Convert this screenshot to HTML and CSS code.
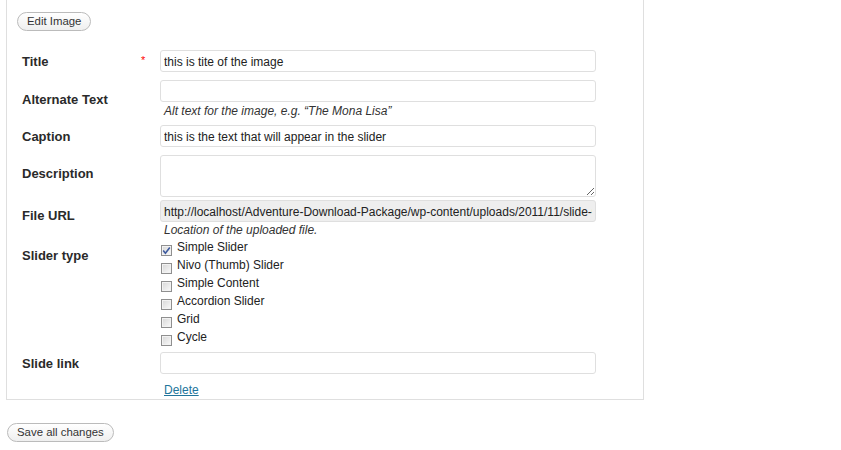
FILE: index.html
```html
<!DOCTYPE html>
<html>
<head>
<meta charset="utf-8">
<link rel="stylesheet" href="styles.css">
</head>
<body>
<div class="page">
  <div class="box">
    <button class="btn btn-edit" type="button">Edit Image</button>
    <div class="form">
      <div class="row">
        <div class="label">Title</div>
        <div class="req">*</div>
        <div class="field"><input class="text" type="text" value="this is tite of the image"></div>
      </div>
      <div class="row row-alt">
        <div class="label">Alternate Text</div>
        <div class="req"></div>
        <div class="field"><input class="text" type="text" value=""><p class="help">Alt text for the image, e.g. “The Mona Lisa”</p></div>
      </div>
      <div class="row">
        <div class="label">Caption</div>
        <div class="req"></div>
        <div class="field"><input class="text" type="text" value="this is the text that will appear in the slider"></div>
      </div>
      <div class="row row-desc">
        <div class="label">Description</div>
        <div class="req"></div>
        <div class="field"><textarea class="area"></textarea></div>
      </div>
      <div class="row row-url">
        <div class="label">File URL</div>
        <div class="req"></div>
        <div class="field"><input class="text readonly" type="text" readonly value="http://localhost/Adventure-Download-Package/wp-content/uploads/2011/11/slide-01.jpg"><p class="help">Location of the uploaded file.</p></div>
      </div>
      <div class="row row-types">
        <div class="label">Slider type</div>
        <div class="req"></div>
        <div class="field checks">
          <label class="check"><span class="box-check checked"><svg width="9" height="9" viewBox="0 0 9 9"><path d="M1.2 4.6 L3.4 7.2 L7.8 1.4" fill="none" stroke="#3d5a9e" stroke-width="1.6"/></svg></span>Simple Slider</label>
          <label class="check"><span class="box-check"></span>Nivo (Thumb) Slider</label>
          <label class="check"><span class="box-check"></span>Simple Content</label>
          <label class="check"><span class="box-check"></span>Accordion Slider</label>
          <label class="check"><span class="box-check"></span>Grid</label>
          <label class="check"><span class="box-check"></span>Cycle</label>
        </div>
      </div>
      <div class="row row-link">
        <div class="label">Slide link</div>
        <div class="req"></div>
        <div class="field"><input class="text" type="text" value=""></div>
      </div>
      <div class="row row-delete">
        <div class="label"></div>
        <div class="req"></div>
        <div class="field"><a class="delete" href="#">Delete</a></div>
      </div>
    </div>
  </div>
  <button class="btn btn-save" type="button">Save all changes</button>
</div>
</body>
</html>
```

FILE: styles.css
```css
html, body {
  margin: 0;
  padding: 0;
  background: #fff;
}
body {
  font-family: "Liberation Sans", Arial, sans-serif;
  color: #333;
  font-size: 12px;
}
.page {
  padding-left: 6px;
}
.box {
  width: 636px;
  border: 1px solid #dfdfdf;
  border-top: none;
  padding: 12px 0 1px 0;
}
.btn {
  font-family: "Liberation Sans", Arial, sans-serif;
  font-size: 11.4px;
  color: #333;
  height: 19px;
  line-height: 17px;
  padding: 0 9px;
  border: 1px solid #bbb;
  border-radius: 11px;
  background: linear-gradient(#ffffff, #efefef);
  display: block;
}
.btn-edit {
  margin-left: 10px;
}
.btn-save {
  margin: 23px 0 0 1px;
}
.form {
  margin-top: 19px;
}
.row {
  display: grid;
  grid-template-columns: 133px 20px 436px;
  align-items: center;
  margin-bottom: 8px;
}
.label {
  padding-left: 15px;
  padding-top: 2px;
  font-size: 13px;
  font-weight: bold;
  line-height: 16px;
  color: #2a2a2a;
}
.req {
  color: #ff0000;
  font-size: 11px;
  line-height: 10px;
  padding-left: 1px;
  margin-top: -3px;
}
.field {
  display: flex;
  flex-direction: column;
}
.text {
  box-sizing: border-box;
  width: 436px;
  height: 22px;
  border: 1px solid #dfdfdf;
  border-radius: 3px;
  padding: 1px 3px 0 3px;
  margin: 0;
  font-family: "Liberation Sans", Arial, sans-serif;
  font-size: 12px;
  color: #222;
  background: #fff;
  outline: none;
}
.readonly {
  background: #eeeeee;
}
.help {
  margin: 0;
  padding-left: 4px;
  font-style: italic;
  font-size: 12px;
  line-height: 15px;
  color: #333;
}
.row-alt {
  margin-bottom: 6px;
}
.row-alt .label {
  padding-top: 0;
}
.row-alt .help {
  padding-top: 2px;
}
.area {
  box-sizing: border-box;
  width: 436px;
  height: 42px;
  border: 1px solid #dfdfdf;
  border-radius: 3px;
  margin: 0;
  padding: 2px 3px;
  font-family: "Liberation Sans", Arial, sans-serif;
  font-size: 12px;
  display: block;
  outline: none;
}
.row-desc {
  margin-bottom: 3px;
}
.row-desc .label {
  align-self: start;
  padding-top: 11px;
}
.row-url {
  margin-bottom: 0;
}
.row-url .label {
  align-self: start;
  padding-top: 8px;
}
.row-url .help {
  padding-top: 1px;
}
.row-types {
  margin-bottom: 6px;
}
.row-types .label {
  align-self: start;
  padding-top: 10px;
}
.checks {
  padding-left: 1px;
}
.check {
  display: flex;
  align-items: flex-start;
  height: 18px;
  line-height: 18px;
  font-size: 12px;
  color: #222;
}
.box-check {
  box-sizing: border-box;
  width: 11px;
  height: 11px;
  margin-top: 7px;
  margin-right: 5px;
  border: 1px solid #8f8f8f;
  background: linear-gradient(135deg, #d6d6d6, #fafafa);
  box-shadow: inset 0 0 0 1px #f2f2f2;
  display: flex;
  align-items: center;
  justify-content: center;
}
.box-check svg {
  display: block;
}
.row-link {
  margin-bottom: 8px;
}
.row-delete {
  margin-bottom: 0;
}
.delete {
  padding-left: 4px;
  padding-top: 1px;
  color: #21759b;
  text-decoration: underline;
  font-size: 12px;
  line-height: 15px;
}
```
